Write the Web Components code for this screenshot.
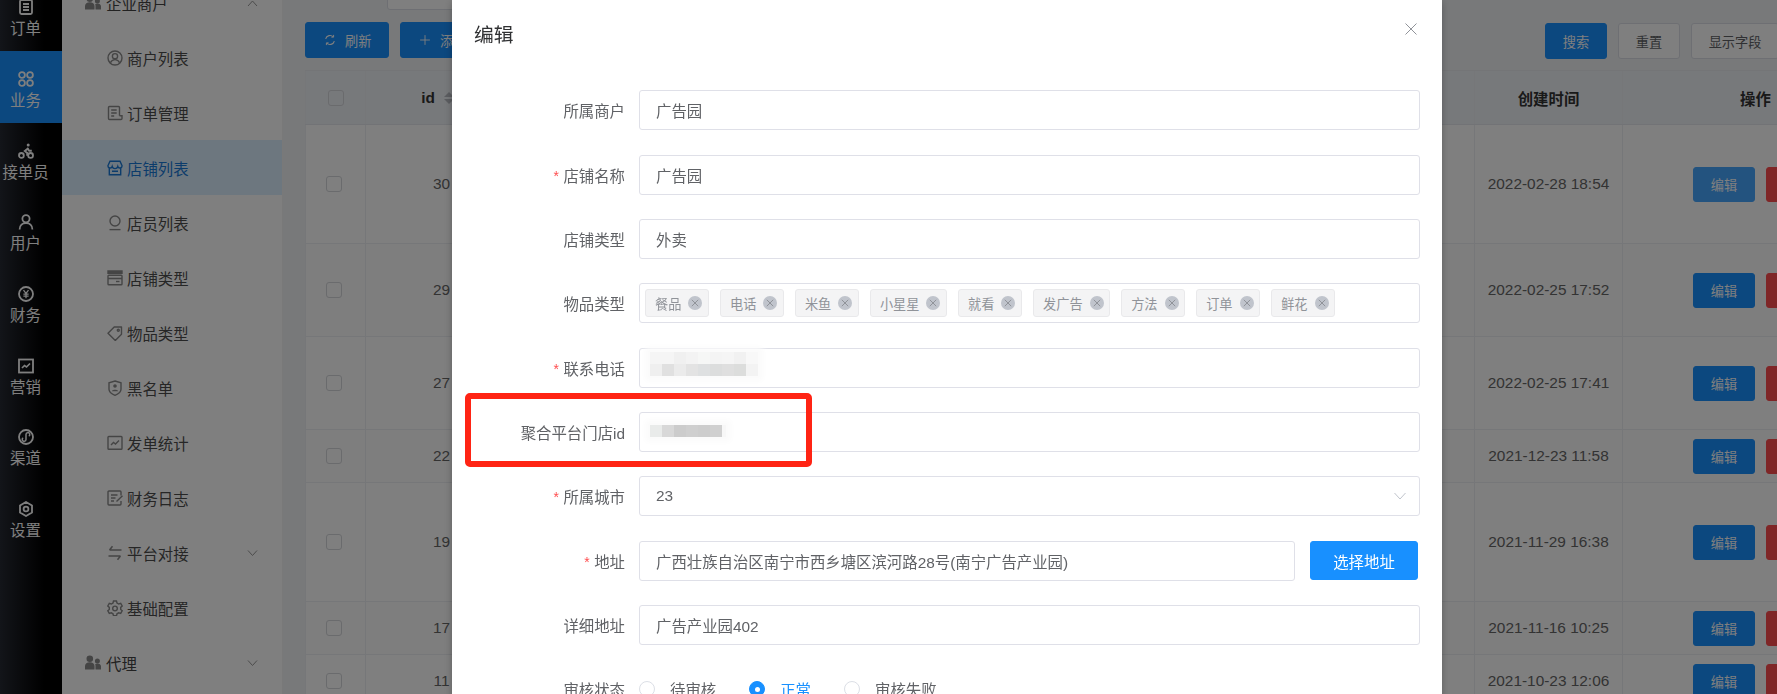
<!DOCTYPE html>
<html lang="zh">
<head>
<meta charset="utf-8">
<title>编辑</title>
<style>
  html, body {
    margin: 0;
    height: 100%;
    overflow: hidden;
    font-family: "Liberation Sans", "Noto Sans CJK SC", sans-serif;
    font-size: 15.4px;
    color: #606266;
    background: #f0f2f5;
  }
</style>
</head>
<body>
<app-shell>
  <nav-rail slot="rail">
    <rail-item icon="order">订单</rail-item>
    <rail-item icon="apps" active>业务</rail-item>
    <rail-item icon="bike">接单员</rail-item>
    <rail-item icon="user">用户</rail-item>
    <rail-item icon="yuan">财务</rail-item>
    <rail-item icon="market">营销</rail-item>
    <rail-item icon="channel">渠道</rail-item>
    <rail-item icon="hex">设置</rail-item>
  </nav-rail>
  <side-menu slot="menu">
    <menu-item icon="people" parent arrow="up">企业商户</menu-item>
    <menu-item icon="userCircle">商户列表</menu-item>
    <menu-item icon="doc">订单管理</menu-item>
    <menu-item icon="store" active>店铺列表</menu-item>
    <menu-item icon="staff">店员列表</menu-item>
    <menu-item icon="card">店铺类型</menu-item>
    <menu-item icon="tag">物品类型</menu-item>
    <menu-item icon="shield">黑名单</menu-item>
    <menu-item icon="chart">发单统计</menu-item>
    <menu-item icon="edit">财务日志</menu-item>
    <menu-item icon="swap" arrow="down">平台对接</menu-item>
    <menu-item icon="gear">基础配置</menu-item>
    <menu-item icon="people" parent arrow="down">代理</menu-item>
  </side-menu>
  <list-page slot="main"></list-page>
</app-shell>

<edit-dialog heading="编辑">
  <form-row label="所属商户"><text-field>广告园</text-field></form-row>
  <form-row label="店铺名称" required><text-field>广告园</text-field></form-row>
  <form-row label="店铺类型"><text-field>外卖</text-field></form-row>
  <form-row label="物品类型">
    <text-field tags>
      <tag-chip>餐品</tag-chip><tag-chip>电话</tag-chip><tag-chip>米鱼</tag-chip><tag-chip>小星星</tag-chip><tag-chip>就看</tag-chip><tag-chip>发广告</tag-chip><tag-chip>方法</tag-chip><tag-chip>订单</tag-chip><tag-chip>鲜花</tag-chip>
    </text-field>
  </form-row>
  <form-row label="联系电话" required>
    <text-field><blur-patch style="margin-bottom:7px" columns="repeat(9, 12px)" cells="f5f5f5 f5f5f5 f0f0f0 f3f3f3 f6f7f6 f4f4f4 f5f5f5 f1f1f1 f8f8f8 efefef e0e0e0 ebebeb e3e3e3 dee0e1 dcdddd dfdfdf dcdddc f3f3f3"></blur-patch></text-field>
  </form-row>
  <form-row label="聚合平台门店id">
    <text-field><blur-patch style="margin-bottom:2px" columns="repeat(6, 12px) 4px" cells="e9ebea d8d8d8 cccccc cfcfcf cdcdcd d0d0d0 f7f7f7"></blur-patch></text-field>
  </form-row>
  <form-row label="所属城市" required><text-field select>23</text-field></form-row>
  <form-row label="地址" required>
    <div style="display:flex;gap:15px;align-items:center">
      <text-field style="flex:1">广西壮族自治区南宁市西乡塘区滨河路28号(南宁广告产业园)</text-field>
      <action-button kind="primary" size="large">选择地址</action-button>
    </div>
  </form-row>
  <form-row label="详细地址"><text-field>广告产业园402</text-field></form-row>
  <form-row label="审核状态">
    <radio-group>
      <radio-option>待审核</radio-option>
      <radio-option checked>正常</radio-option>
      <radio-option>审核失败</radio-option>
    </radio-group>
  </form-row>
</edit-dialog>

<script>
const ICONS = {
  order: '<rect x="2" y="1" width="12" height="14" rx="1.5"/><path d="M5 5h6M5 8h6M5 11h6"/>',
  apps: '<circle cx="4" cy="4" r="2.9"/><circle cx="12" cy="4" r="2.9"/><circle cx="4" cy="12" r="2.9"/><circle cx="12" cy="12" r="2.9"/>',
  bike: '<circle cx="3.4" cy="12.4" r="2.4"/><circle cx="12.6" cy="12.4" r="2.4"/><circle cx="10.2" cy="2" r="1.5" fill="currentColor" stroke="none"/><path d="M10.5 5 6.8 8l2.4 2v2.8M9.5 5.5l1.7 2.3h2.6" stroke-width="1.9"/>',
  user: '<circle cx="8" cy="4.8" r="3.6"/><path d="M1.6 15.4c0-4 2.9-6.4 6.4-6.4s6.400 2.400 6.400 6.400"/>',
  yuan: '<circle cx="8" cy="8" r="7"/><path d="M5.500 4.200 8 7.500l2.500-3.300M8 7.500v4.800M5.400 8.100h5.200M5.400 10.200h5.200" stroke-width="1.300"/>',
  market: '<rect x="1" y="1.500" width="14" height="13"/><path d="M4 10l2.500-2.500 2 1.500L12 5.500" stroke-width="1.700"/>',
  channel: '<circle cx="8" cy="8" r="7"/><path d="M5.200 8.800a1.900 1.900 0 1 0 2.800 1.700V5.500a1.900 1.900 0 1 1 2.800 1.700" stroke-width="1.500"/>',
  hex: '<path d="M8 1l6 3.500v7L8 15l-6-3.500v-7z"/><circle cx="8" cy="8" r="2.400"/>',
  people: '<g fill="currentColor" stroke="none"><circle cx="4.800" cy="3.800" r="3.300"/><path d="M0 14.500V11c0-2.300 2-3.700 4.800-3.700S9.500 8.700 9.500 11v3.500z"/><circle cx="12.400" cy="6" r="2.500"/><path d="M10.500 14.500V10.500c0-.6-.2-1-.4-1.300.7-.4 1.500-.6 2.300-.6 2 0 3.600 1.100 3.600 2.900v3z"/></g>',
  userCircle: '<circle cx="8" cy="8" r="7"/><circle cx="8" cy="6.200" r="2.600"/><path d="M3.400 12.800c1-2.300 2.800-3.200 4.600-3.200s3.600.9 4.600 3.200"/>',
  doc: '<path d="M12.500 10.800V2.500a1 1 0 0 0-1-1H2.500a1 1 0 0 0-1 1v11a1 1 0 0 0 1 1H14a1 1 0 0 0 1-1v-2.700h-2.500"/><path d="M4.200 5h5.500M4.200 8h5.500M4.200 11h3"/>',
  store: '<path d="M3 1.200h10l2.100 4.600a2.200 2.200 0 0 1-4.300.7 2.900 2.900 0 0 1-5.600 0 2.200 2.200 0 0 1-4.300-.7z"/><path d="M2.300 8v6.800h11.400V8M5 11.200h6"/>',
  staff: '<circle cx="8" cy="6" r="5"/><path d="M2.500 14.600h11"/>',
  card: '<path d="M1 1h14v2.200H1z" fill="currentColor"/><rect x="1" y="5.200" width="14" height="9.600" rx=".8"/><path d="M1 8.500h14" stroke-width="1.600"/><path d="M9 11.500h3.500"/>',
  tag: '<path d="M1 8.200 7.200 2H14.500v7.300L8.300 15.400z" stroke-linejoin="round"/><circle cx="11.300" cy="5.200" r="1"/>',
  shield: '<path d="M8 1l6 1.800v6.500c0 2.800-2.800 4.800-6 6-3.200-1.200-6-3.200-6-6V2.800z"/><circle cx="8" cy="6" r="1.800" fill="currentColor" stroke="none"/><path d="M4.800 11.200c.5-2 6-2 6.400 0z" fill="currentColor" stroke="none"/>',
  chart: '<rect x="1" y="1.500" width="14" height="12.800" rx=".8"/><path d="M4 10l2.500-2.500 2 1.500L12 5.500"/>',
  edit: '<path d="M14 5.500V2a1 1 0 0 0-1-1H2a1 1 0 0 0-1 1v12a1 1 0 0 0 1 1h11a1 1 0 0 0 1-1v-3"/><path d="M4 5h6.500M4 8h4.500M4 11h3M9.500 11.500 15.500 5.800"/>',
  swap: '<path d="M2.500 5h12M2.500 5l3-3.800M13.500 11H1.500M13.500 11l-3 3.800" stroke-width="1.500"/>',
  gear: '<path d="M6.500 1h3l.5 2 1.700 1 2-.6 1.500 2.600-1.500 1.400v2l1.500 1.400-1.500 2.600-2-.6-1.700 1-.5 2h-3l-.5-2-1.700-1-2 .6-1.500-2.600 1.500-1.400v-2L.8 6l1.500-2.600 2 .6 1.700-1z"/><circle cx="8" cy="8.400" r="2.300"/>',
  refresh: '<path d="M2.200 6.500A6 6 0 0 1 12.500 4M13.800 9.500A6 6 0 0 1 3.500 12"/><path d="M12.800 1.200v3h-3M3.200 14.800v-3h3" stroke-width="1.300"/>',
  plus: '<path d="M8 1.500v13M1.500 8h13"/>'
};

function icon(name, size, strokeWidth) {
  return `<svg xmlns="http://www.w3.org/2000/svg" width="${size}" height="${size}" viewBox="0 0 16 16" fill="none" stroke="currentColor" stroke-width="${strokeWidth}">${ICONS[name] || ""}</svg>`;
}

class AppShell extends HTMLElement {
  constructor() {
    super();
    this.attachShadow({ mode: "open" });
    this.shadowRoot.innerHTML = `
      <style>
        :host {
          display: grid;
          grid-template-columns: 62px 221px 1fr;
          height: 694px;
          overflow: hidden;
        }
      </style>
      <slot name="rail"></slot>
      <slot name="menu"></slot>
      <slot name="main"></slot>
    `;
  }
}

class NavRail extends HTMLElement {
  constructor() {
    super();
    this.attachShadow({ mode: "open" });
    this.shadowRoot.innerHTML = `
      <style>
        :host {
          display: block;
          height: 694px;
          overflow: hidden;
          background: linear-gradient(to right, #262a33, #000 72%);
        }
        .list {
          display: flex;
          flex-direction: column;
          margin-top: -20.7px;
        }
      </style>
      <div class="list"><slot></slot></div>
    `;
  }
}

class RailItem extends HTMLElement {
  constructor() {
    super();
    this.attachShadow({ mode: "open" });
    this.shadowRoot.innerHTML = `
      <style>
        :host {
          display: flex;
          flex-direction: column;
          align-items: center;
          box-sizing: border-box;
          height: 71.7px;
          padding: 19px 11px 0 0;
          color: #fff;
          font-size: 15.4px;
        }
        :host([active]) { background: #1890ff; }
        .ic { height: 18px; display: flex; align-items: center; margin-bottom: 2px; }
        .tx { line-height: 22px; white-space: nowrap; }
      </style>
      <span class="ic">${icon(this.getAttribute("icon"), 16, 1.8)}</span>
      <span class="tx"><slot></slot></span>
    `;
  }
}

class SideMenu extends HTMLElement {
  constructor() {
    super();
    this.attachShadow({ mode: "open" });
    this.shadowRoot.innerHTML = `
      <style>
        :host {
          display: block;
          height: 694px;
          overflow: hidden;
          background: #fff;
          border-right: 1px solid #f2f2f2;
          box-sizing: border-box;
        }
        .list { display: flex; flex-direction: column; margin-top: -25px; }
      </style>
      <div class="list"><slot></slot></div>
    `;
  }
}

class MenuItem extends HTMLElement {
  constructor() {
    super();
    this.attachShadow({ mode: "open" });
    const arrow = this.getAttribute("arrow");
    const arrowPath = arrow === "up" ? "M1 7l4.500-5L10 7" : "M1 1.500l4.500 5 4.500-5";
    this.shadowRoot.innerHTML = `
      <style>
        :host {
          display: flex;
          align-items: center;
          flex: none;
          height: 55px;
          padding: 0 24px 0 45px;
          font-size: 15.4px;
          color: #4d4d4d;
        }
        :host([parent]) { padding-left: 23px; color: #444; }
        :host([active]) { background: #dbeeff; color: #1979d6; }
        .ic { width: 16px; height: 16px; margin-right: 4px; color: #8a8a8a; }
        :host([parent]) .ic { margin-right: 5px; color: #8a8a8a; }
        :host([active]) .ic { color: #1979d6; }
        svg { display: block; }
        .tx { white-space: nowrap; flex: 1; }
        .ar { color: #999; }
      </style>
      <span class="ic">${icon(this.getAttribute("icon"), 16, 1.4)}</span>
      <span class="tx"><slot></slot></span>
      ${arrow ? `<svg class="ar" width="11" height="8" viewBox="0 0 11 8" fill="none" stroke="currentColor" stroke-width="1"><path d="${arrowPath}"/></svg>` : ""}
    `;
  }
}

class ActionButton extends HTMLElement {
  constructor() {
    super();
    this.attachShadow({ mode: "open" });
    this.shadowRoot.innerHTML = `
      <style>
        :host {
          display: inline-flex;
          align-items: center;
          justify-content: center;
          box-sizing: border-box;
          flex: none;
          height: 36px;
          padding: 0 18px;
          border-radius: 3px;
          border: 1px solid #dcdfe6;
          background: #fff;
          color: #606266;
          font-size: 13.2px;
          white-space: nowrap;
        }
        :host([kind="primary"]) { background: #1890ff; border-color: #1890ff; color: #fff; }
        :host([kind="hover"]) { background: #46a6ff; border-color: #46a6ff; color: #fff; }
        :host([kind="danger"]) { background: #ff4d4f; border-color: #ff4d4f; color: #fff; }
        :host([size="large"]) { width: 108px; height: 39px; padding: 0; font-size: 15.4px; margin-right: 2px; }
        :host([size="cell"]) { width: 62px; height: 35px; padding: 0; }
        svg { margin-right: 9px; }
      </style>
      ${this.hasAttribute("icon") ? icon(this.getAttribute("icon"), 12, this.getAttribute("icon") === "plus" ? 1.2 : 1.5) : ""}
      <slot></slot>
    `;
  }
}

class DataTable extends HTMLElement {
  constructor() {
    super();
    this.attachShadow({ mode: "open" });
    const rows = [
      ["30", "2022-02-28 18:54", 119],
      ["29", "2022-02-25 17:52", 93],
      ["27", "2022-02-25 17:41", 93],
      ["22", "2021-12-23 11:58", 53],
      ["19", "2021-11-29 16:38", 119],
      ["17", "2021-11-16 10:25", 53],
      ["11", "2021-10-23 12:06", 53]
    ];
    const body = rows.map((r, i) => {
      const cls = i % 2 ? "row odd" : "row";
      const kind = i === 0 ? "hover" : "primary";
      return `
        <div class="${cls}" style="height:${r[2]}px">
          <div class="cell check"><span class="box"></span></div>
          <div class="cell">${r[0]}</div>
          <div class="cell"></div>
          <div class="cell">${r[1]}</div>
          <div class="cell ops">
            <action-button kind="${kind}" size="cell">编辑</action-button>
            <action-button kind="danger" size="cell">删除</action-button>
          </div>
        </div>`;
    }).join("");
    this.shadowRoot.innerHTML = `
      <style>
        :host { display: block; width: 1583px; background: #fff; border-top: 1px solid #e8eaee; font-size: 15.4px; color: #666; }
        .row {
          display: grid;
          grid-template-columns: 60px 152px 957px 148px 266px;
          box-sizing: border-box;
          border-bottom: 1px solid #eceef2;
        }
        .row.odd { background: #fcfcfc; }
        .row.head { height: 54px; background: #eff2f7; color: #333; font-weight: 700; border-bottom-color: #e4e7ec; }
        .cell {
          display: flex;
          align-items: center;
          justify-content: center;
          border-left: 1px solid #eceef2;
          white-space: nowrap;
        }
        .check { padding-right: 4px; }
        .head .check { padding-right: 0; }
        .box {
          width: 14px;
          height: 14px;
          border: 1px solid #d4d6da;
          border-radius: 3px;
          background: #fff0;
        }
        .sort { display: inline-flex; flex-direction: column; gap: 2px; margin-left: 9px; }
        .sort i { width: 0; height: 0; border: 5px solid transparent; border-top-width: 0; border-bottom: 5px solid #b8bbc2; }
        .sort i + i { border-bottom-width: 0; border-top: 5px solid #b8bbc2; }
        .ops { justify-content: flex-start; padding-left: 70px; gap: 11px; }
      </style>
      <div class="row head">
        <div class="cell"><span class="box"></span></div>
        <div class="cell" style="padding-right:8px">id<span class="sort"><i></i><i></i></span></div>
        <div class="cell"></div>
        <div class="cell">创建时间</div>
        <div class="cell">操作</div>
      </div>
      ${body}
    `;
  }
}

class ListPage extends HTMLElement {
  constructor() {
    super();
    this.attachShadow({ mode: "open" });
    this.shadowRoot.innerHTML = `
      <style>
        :host {
          display: block;
          height: 694px;
          overflow: hidden;
          padding-left: 22px;
          min-width: 0;
        }
        .filter {
          width: 300px;
          height: 30px;
          margin: -20px 0 12px 82px;
          border: 1px solid #dcdfe6;
          border-radius: 3px;
          box-sizing: border-box;
          background: #fff;
        }
        .bar {
          display: flex;
          justify-content: space-between;
          align-items: flex-start;
          height: 37px;
          margin-bottom: 11px;
        }
        .left, .right { display: flex; gap: 11px; }
        .right { margin-top: 1px; width: 232px; flex: none; }
        .left action-button { width: 84px; padding: 0 0 0 18px; justify-content: flex-start; }
        .left action-button + action-button { width: 100px; }
        .right action-button { width: 62px; padding: 0; }
        .right action-button:last-child { width: 88px; flex: none; }
      </style>
      <div class="filter"></div>
      <div class="bar">
        <div class="left">
          <action-button kind="primary" icon="refresh">刷新</action-button>
          <action-button kind="primary" icon="plus">添加</action-button>
        </div>
        <div class="right">
          <action-button kind="primary">搜索</action-button>
          <action-button>重置</action-button>
          <action-button>显示字段</action-button>
        </div>
      </div>
      <data-table></data-table>
    `;
  }
}

class EditDialog extends HTMLElement {
  constructor() {
    super();
    this.attachShadow({ mode: "open" });
    this.shadowRoot.innerHTML = `
      <style>
        :host {
          display: block;
          position: fixed;
          top: 0;
          left: 0;
          width: 100%;
          height: 100vh;
          overflow: hidden;
          background: rgba(0, 0, 0, 0.5);
        }
        #modal {
          position: relative;
          box-sizing: border-box;
          width: 990px;
          height: 760px;
          margin-left: 452px;
          background: #fff;
          box-shadow: 0 2px 8px rgba(0, 0, 0, 0.26);
        }
        header {
          display: flex;
          justify-content: space-between;
          align-items: center;
          height: 66px;
          padding: 0 25px 0 22px;
          font-size: 19.8px;
          color: #303133;
        }
        header svg { color: #909399; margin-top: -8px; }
        #form {
          display: flex;
          flex-direction: column;
          gap: 24.33px;
          padding: 24.4px 22px 0 0;
        }
        /* red hand-drawn marker on the screenshot */
        #marker {
          position: absolute;
          left: 13px;
          top: 393px;
          width: 347px;
          height: 74px;
          box-sizing: border-box;
          border: 6px solid #ff2414;
          border-radius: 5px;
          pointer-events: none;
        }
      </style>
      <div id="modal">
        <header>
          <span>${this.getAttribute("heading")}</span>
          <svg width="12" height="12" viewBox="0 0 12 12" fill="none" stroke="currentColor" stroke-width="1"><path d="M.5.500l11 11M11.500.500l-11 11"/></svg>
        </header>
        <div id="form"><slot></slot></div>
        <div id="marker"></div>
      </div>
    `;
  }
}

class FormRow extends HTMLElement {
  constructor() {
    super();
    this.attachShadow({ mode: "open" });
    this.shadowRoot.innerHTML = `
      <style>
        :host {
          display: grid;
          grid-template-columns: 173px 1fr;
          column-gap: 14px;
          align-items: center;
          min-height: 40px;
        }
        label { text-align: right; color: #606266; font-size: 15.4px; white-space: nowrap; }
        .req { color: #ff4d4f; font-family: "Liberation Mono", monospace; margin-right: 3px; font-size: 14px; }
      </style>
      <label>${this.hasAttribute("required") ? '<span class="req">*</span>' : ""}${this.getAttribute("label")}</label>
      <div><slot></slot></div>
    `;
  }
}

class TextField extends HTMLElement {
  constructor() {
    super();
    this.attachShadow({ mode: "open" });
    this.shadowRoot.innerHTML = `
      <style>
        :host {
          display: flex;
          align-items: center;
          box-sizing: border-box;
          height: 40px;
          padding: 0 16px;
          border: 1px solid #dfe0e8;
          border-radius: 3px;
          background: #fff;
          color: #606266;
          font-size: 15.4px;
          white-space: nowrap;
        }
        :host([tags]) { padding: 0 5px; gap: 11px; }
        .grow { flex: 1; display: flex; align-items: center; gap: inherit; min-width: 0; }
        svg { color: #c0c4cc; flex: none; margin-right: -3px; }
      </style>
      <div class="grow"><slot></slot></div>
      ${this.hasAttribute("select") ? '<svg width="12" height="8" viewBox="0 0 12 8" fill="none" stroke="currentColor" stroke-width="1"><path d="M.5 1 6 7l5.500-6"/></svg>' : ""}
    `;
  }
}

class TagChip extends HTMLElement {
  constructor() {
    super();
    this.attachShadow({ mode: "open" });
    this.shadowRoot.innerHTML = `
      <style>
        :host {
          display: inline-flex;
          align-items: center;
          box-sizing: border-box;
          height: 28px;
          padding: 0 5.600px 0 9px;
          background: #f4f4f5;
          border: 1px solid #e9e9eb;
          border-radius: 3px;
          color: #909399;
          font-size: 13.2px;
        }
        .x {
          display: inline-flex;
          align-items: center;
          justify-content: center;
          width: 14px;
          height: 14px;
          margin-left: 7px;
          border-radius: 50%;
          background: #c0c4cc;
          color: #909399;
        }
      </style>
      <slot></slot>
      <span class="x"><svg width="8" height="8" viewBox="0 0 8 8" fill="none" stroke="currentColor" stroke-width="1"><path d="M.8.800l6.400 6.400M7.200.800.800 7.200"/></svg></span>
    `;
  }
}

// mosaic over the private numbers in the screenshot
class BlurPatch extends HTMLElement {
  constructor() {
    super();
    this.attachShadow({ mode: "open" });
    const cells = this.getAttribute("cells").split(" ")
      .map((c) => `<i style="background:#${c}"></i>`).join("");
    this.shadowRoot.innerHTML = `
      <style>
        :host {
          display: grid;
          grid-template-columns: ${this.getAttribute("columns")};
          grid-auto-rows: 12px;
          margin-left: -6px;
          box-shadow: 0 0 6px 5px #fbfbfb;
          background: #fbfbfb;
        }
      </style>
      ${cells}
    `;
  }
}

class RadioGroup extends HTMLElement {
  constructor() {
    super();
    this.attachShadow({ mode: "open" });
    this.shadowRoot.innerHTML = `
      <style>
        :host { display: flex; align-items: center; gap: 33px; height: 40px; }
      </style>
      <slot></slot>
    `;
  }
}

class RadioOption extends HTMLElement {
  constructor() {
    super();
    this.attachShadow({ mode: "open" });
    this.shadowRoot.innerHTML = `
      <style>
        :host {
          display: inline-flex;
          align-items: center;
          gap: 15px;
          font-size: 15.4px;
          color: #606266;
          white-space: nowrap;
        }
        :host([checked]) { color: #1890ff; }
        .dot {
          box-sizing: border-box;
          width: 16px;
          height: 16px;
          border: 1px solid #dcdfe6;
          border-radius: 50%;
          background: #fff;
          display: flex;
          align-items: center;
          justify-content: center;
        }
        :host([checked]) .dot { background: #1890ff; border-color: #1890ff; }
        :host([checked]) .dot::after { content: ""; width: 5px; height: 5px; border-radius: 50%; background: #fff; }
      </style>
      <span class="dot"></span><slot></slot>
    `;
  }
}

customElements.define("app-shell", AppShell);
customElements.define("nav-rail", NavRail);
customElements.define("rail-item", RailItem);
customElements.define("side-menu", SideMenu);
customElements.define("menu-item", MenuItem);
customElements.define("action-button", ActionButton);
customElements.define("data-table", DataTable);
customElements.define("list-page", ListPage);
customElements.define("edit-dialog", EditDialog);
customElements.define("form-row", FormRow);
customElements.define("text-field", TextField);
customElements.define("tag-chip", TagChip);
customElements.define("blur-patch", BlurPatch);
customElements.define("radio-group", RadioGroup);
customElements.define("radio-option", RadioOption);
</script>
</body>
</html>
